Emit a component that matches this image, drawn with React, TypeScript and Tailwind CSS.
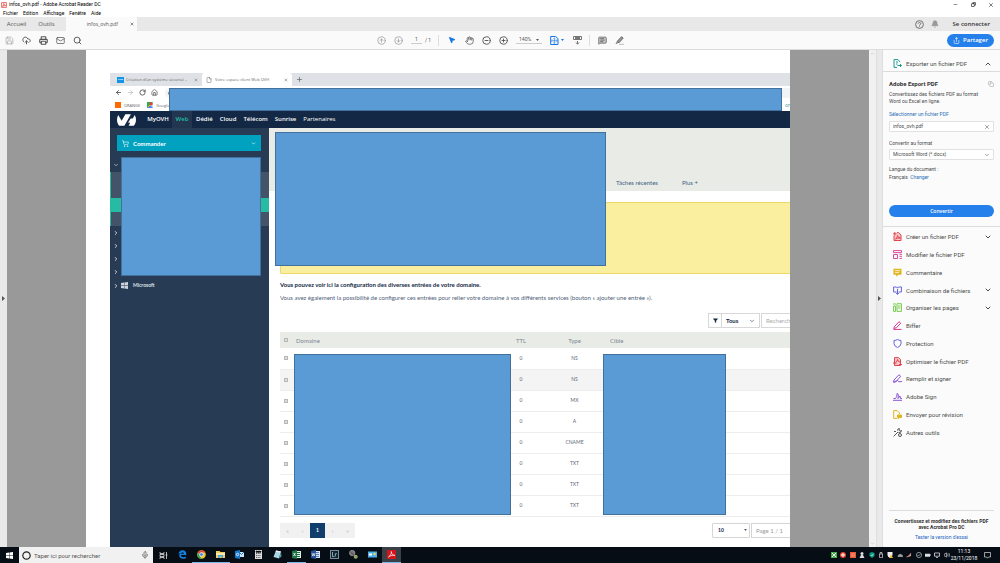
import type { ReactNode } from "react";
import {
  ArrowLeft, ArrowRight, Bell, ChevronDown, ChevronRight, ChevronUp, CircleArrowDown, CircleArrowUp,
  CircleMinus, CirclePlus, CloudUpload, Copy, File, Filter, Hand, House, Lock, Mail, MessageSquareText, Mic,
  Minus, MousePointer2, Plus, Printer, RotateCw, Save, Search, Share, ShoppingCart, X,
} from "lucide-react";

const ui = "font-['Open_Sans','Noto_Sans',sans-serif]";
const small = "font-['Roboto','Noto_Sans',sans-serif]";
const web = "font-['Lato','Noto_Sans',sans-serif]";

const records = ["NS", "NS", "MX", "A", "CNAME", "TXT", "TXT", "TXT"];

export default function App() {
  return (
    <div className={`${ui} flex h-screen flex-col overflow-hidden bg-[#fdfdfd] text-[5px] leading-[7px] text-[#4b4b4b]`}>
      <TitleBar />
      <TabBar />
      <Toolbar />
      <main className="flex min-h-0 flex-1 bg-[#999]">
        <div className="flex w-[7px] shrink-0 items-center justify-center bg-[#e9e9e9]"><Triangle /></div>
        <div className="flex min-w-0 flex-1 justify-center overflow-hidden"><Document /></div>
        <div className="flex w-[7px] shrink-0 flex-col items-center justify-between bg-[#f1f1f1] py-px text-[#aaa]"><ChevronUp size={5} /><ChevronDown size={5} /></div>
        <div className="flex w-[7px] shrink-0 items-center justify-center border-x border-[#dedede] bg-[#e9e9e9]"><Triangle /></div>
        <ToolsPanel />
      </main>
      <Taskbar />
    </div>
  );
}

function Triangle() {
  return <svg width="3" height="5" viewBox="0 0 3 5"><path d="M0 0l3 2.5L0 5z" fill="#555" /></svg>;
}

function IconButton({ label, children, className = "" }: { label: string; children: ReactNode; className?: string }) {
  return <button aria-label={label} className={`flex shrink-0 items-center justify-center ${className}`}>{children}</button>;
}

function TitleBar() {
  return (
    <header className={`${small} h-[17px] shrink-0 bg-white text-black`}>
      <div className="flex h-[9px] items-center pl-[1px]">
        <svg width="6" height="6" viewBox="0 0 6 6" className="mr-[2px]"><rect x=".4" y=".4" width="5.2" height="5.2" rx=".6" fill="#fbe3e1" stroke="#e0564c" strokeWidth=".8" /><path d="M1.4 4.4C3 3.6 3 2.3 2.7 1.5c.3 1.6 1 2.1 2 2.1-1.2-.1-2.2.2-3.300.8" fill="none" stroke="#d8352a" strokeWidth=".5" /></svg>
        <h1>infos_ovh.pdf - Adobe Acrobat Reader DC</h1>
        <div className="ml-auto flex">
          <IconButton label="Réduire" className="w-[18px]"><Minus size={5} /></IconButton>
          <IconButton label="Restaurer" className="w-[18px]"><Copy size={5} className="-scale-x-100" strokeWidth={3} /></IconButton>
          <IconButton label="Fermer" className="w-[18px]"><X size={6} /></IconButton>
        </div>
      </div>
      <nav className="flex h-[8px] items-center gap-[5px] pl-[3px]">
        {["Fichier", "Edition", "Affichage", "Fenêtre", "Aide"].map((m) => <button key={m}>{m}</button>)}
      </nav>
    </header>
  );
}

function TabBar() {
  return (
    <div className="flex h-[14px] shrink-0 items-center bg-[#e8e8e8] text-[6px] text-[#555]">
      <button className="w-[33px]">Accueil</button>
      <button className="w-[27px]">Outils</button>
      <div className="ml-[6px] flex h-full w-[71px] items-center justify-end bg-[#fafafa] pr-[3px]">
        <span className="text-[5px]">infos_ovh.pdf</span>
        <IconButton label="Fermer l'onglet" className="ml-[12px]"><X size={4} strokeWidth={4} /></IconButton>
      </div>
      <div className="ml-auto flex items-center pr-[10px]">
        <IconButton label="Aide">
          <svg width="9" height="9" viewBox="0 0 9 9" fill="none" stroke="#555" strokeWidth=".8"><circle cx="4.500" cy="4.500" r="3.900" /><path d="M3.200 3.700c0-1.700 2.700-1.500 2.600 0 0 .9-1.300.9-1.300 1.900M4.500 6.300v.8" /></svg>
        </IconButton>
        <IconButton label="Notifications" className="ml-[7px] text-[#999]"><Bell size={8} fill="currentColor" /></IconButton>
        <button className="ml-[14px] font-semibold text-[#333]">Se connecter</button>
      </div>
    </div>
  );
}

function Toolbar() {
  return (
    <div className={`${small} flex h-[19px] shrink-0 items-center border-b border-[#dcdcdc] bg-[#fafafa] text-[#555]`}>
      <div className="flex flex-1 items-center gap-[8px] pl-[5px]">
        <IconButton label="Enregistrer" className="text-[#aaa]"><Save size={9} /></IconButton>
        <IconButton label="Envoyer"><CloudUpload size={9} strokeWidth={2.500} /></IconButton>
        <IconButton label="Imprimer"><Printer size={9} strokeWidth={3} /></IconButton>
        <IconButton label="Courriel"><Mail size={9} /></IconButton>
        <IconButton label="Rechercher"><Search size={9} strokeWidth={2.500} /></IconButton>
      </div>
      <div className="flex shrink-0 items-center pl-[2px]">
        <IconButton label="Page précédente" className="text-[#999]"><CircleArrowUp size={9} /></IconButton>
        <IconButton label="Page suivante" className="ml-[8px] text-[#999]"><CircleArrowDown size={9} /></IconButton>
        <input aria-label="Page" defaultValue="1" className="ml-[8px] w-[11px] border-b border-[#ccc] text-center" />
        <span className="ml-[3px]">/ 1</span>
        <i className="ml-[7px] h-[11px] w-px bg-[#ddd]" />
        <IconButton label="Sélection" className="ml-[9px] text-[#1473e6]"><MousePointer2 size={8} fill="currentColor" /></IconButton>
        <IconButton label="Main" className="ml-[9px]"><Hand size={9} /></IconButton>
        <IconButton label="Zoom arrière" className="ml-[8px]"><CircleMinus size={9} strokeWidth={2.500} /></IconButton>
        <IconButton label="Zoom avant" className="ml-[8px]"><CirclePlus size={9} strokeWidth={2.500} /></IconButton>
        <button className="ml-[8px] flex w-[26px] items-center justify-between border-b border-[#ccc] px-[3px]">140%<Caret /></button>
        <IconButton label="Ajuster la page" className="ml-[8px] gap-[2px] text-[#1473e6]">
          <svg width="9" height="9" viewBox="0 0 9 9" fill="none" stroke="currentColor"><path d="M.7.5h5L8 2.700v5.800H.7z" strokeWidth="1" /><path d="M2 4.700h5M4.400 2.200v5M2 3.500l-.7 1.200.7 1.200M6.700 3.500l.7 1.200-.7 1.200M3.300 2.800l1.100-.8 1.100.8M3.300 6.700l1.100.8 1.100-.8" strokeWidth=".6" /></svg>
          <Caret />
        </IconButton>
        <IconButton label="Défilement" className="ml-[9px]">
          <svg width="9" height="9" viewBox="0 0 9 9" fill="none" stroke="#666"><path d="M.5.500h8v3h-8zM2 1.500h5M2 2.500h5M4.500 5v3M3 6.500l1.500 1.700L6 6.500" strokeWidth=".9" /></svg>
        </IconButton>
        <i className="ml-[7px] h-[11px] w-px bg-[#ddd]" />
        <IconButton label="Commentaire" className="ml-[8px]"><MessageSquareText size={9} fill="#ccc" /></IconButton>
        <IconButton label="Surligner" className="ml-[8px]">
          <svg width="9" height="9" viewBox="0 0 9 9"><path d="M2 5.500L6.500.700l1.700 1.400L4 6.800z" fill="#999" stroke="#555" strokeWidth=".8" /><path d="M1.700 6L.5 8l2.800-.9" fill="#555" /><path d="M4 8.300h5" stroke="#bbb" /></svg>
        </IconButton>
      </div>
      <div className="flex flex-1 justify-end pr-[6px]">
        <button className={`${ui} flex h-[13px] w-[47px] items-center justify-center gap-[3px] rounded-full bg-[#2680eb] text-[6px] font-semibold text-white`}><Share size={7} />Partager</button>
      </div>
    </div>
  );
}

function Caret() {
  return <svg width="3" height="2" viewBox="0 0 3 2" className="shrink-0"><path d="M0 0h3L1.500 2z" fill="currentColor" /></svg>;
}

/* One PDF page; the blue boxes are annotations lying over the scanned content. */
function Document() {
  return (
    <article className="relative w-[704px] shrink-0 overflow-hidden bg-white pt-[23px] pl-[24px]">
      <BrowserChrome />
      <OvhNav />
      <div className={`${web} flex h-full`}>
        <OvhSidebar />
        <OvhContent />
      </div>
      <Mask className="top-[38px] left-[83px] h-[23px] w-[613px]" />
      <Mask className="top-[107px] left-[35px] h-[119px] w-[140px]" />
      <Mask className="top-[82px] left-[189px] h-[134px] w-[331px]" />
      <Mask className="top-[304px] left-[208px] h-[161px] w-[217px]" />
      <Mask className="top-[304px] left-[517px] h-[161px] w-[123px]" />
    </article>
  );
}

function Mask({ className }: { className: string }) {
  return <div className={`absolute border border-[#41719c] bg-[#5b9bd5] ${className}`} />;
}

function BrowserChrome() {
  return (
    <div className="text-[4px] text-[#666]">
      <div className="flex h-[13px] items-center bg-[#dee1e6]">
        <div className="flex w-[92px] items-center pr-[4px] pl-[7px]">
          <span className="flex h-[6px] w-[7px] items-center justify-center overflow-hidden bg-[#1295e8] text-[2px] font-bold text-white">SCIM</span>
          <span className="ml-[2px] flex-1 truncate">Création d'un système sécurisé –</span>
          <X size={4} strokeWidth={3} />
        </div>
        <div className="flex h-full w-[90px] items-center rounded-t-[3px] bg-white pr-[4px] pl-[4px]">
          <File size={6} />
          <span className="ml-[3px] flex-1">Votre espace client Web OVH</span>
          <X size={4} strokeWidth={3} />
        </div>
        <Plus size={7} className="ml-[4px]" strokeWidth={2.500} />
      </div>
      <div className="flex h-[13px] items-center gap-[5px] pl-[5px] text-[#555]">
        <ArrowLeft size={7} strokeWidth={3} /><ArrowRight size={7} className="text-[#aaa]" /><RotateCw size={7} strokeWidth={3} /><House size={7} strokeWidth={2.500} />
        <span className="ml-[2px] flex h-[10px] flex-1 items-center rounded-l-full bg-[#f1f3f4] pl-[3px]"><Lock size={5} fill="currentColor" /></span>
      </div>
      <div className="flex h-[12px] items-center pl-[5px]">
        <i className="h-[6px] w-[6px] bg-[#ff6a00]" />
        <a href="#" className="ml-[3px]">ORANGE</a>
        <svg width="6" height="6" viewBox="0 0 6 6" className="ml-[7px]"><path d="M0 0h6v6H0z" fill="#34a853" /><path d="M0 6l6-6v6z" fill="#d7dde6" /><path d="M0 6l3-3 3 3z" fill="#4285f4" /><path d="M1 5l4-4" stroke="#fbbc05" /><circle cx="4.200" cy="1.800" r="1.600" fill="#ea4335" /></svg>
        <a href="#" className="ml-[3px]">Google</a>
        <span className="ml-auto text-[5px] text-[#3a9b95]">or</span>
      </div>
    </div>
  );
}

function OvhNav() {
  const link = "flex h-full items-center";
  return (
    <nav className="flex h-[17px] items-center bg-[#122844] text-[6px] font-semibold text-white">
      <svg width="19" height="12" viewBox="0 4.800 24 14.400" className="ml-[7px]" fill="#fff">
        <path d="M19.881 10.095l2.563-4.450C23.434 7.389 24 9.404 24 11.555c0 2.880-1.017 5.523-2.710 7.594h-6.620l2.040-3.541h-2.696l3.176-5.513h2.691zm-2.320-5.243L9.333 19.140l.003.009H2.709C1.014 17.077 0 14.435 0 11.555c0-2.152.570-4.170 1.561-5.918L5.855 13.080l4.750-8.228h6.956z" />
      </svg>
      <a href="#" className={`${link} ml-[8px] w-[28px] justify-center`}>MyOVH</a>
      <a href="#" className={`${link} w-[20px] justify-center bg-[#22364f] text-[#28bba4]`}>Web</a>
      <a href="#" className={`${link} ml-[4px]`}>Dédié</a>
      <a href="#" className={`${link} ml-[7px]`}>Cloud</a>
      <a href="#" className={`${link} ml-[7px]`}>Télécom</a>
      <a href="#" className={`${link} ml-[7px]`}>Sunrise</a>
      <a href="#" className={`${link} ml-[7px] font-normal`}>Partenaires</a>
    </nav>
  );
}

function OvhSidebar() {
  return (
    <aside className="w-[159px] shrink-0 bg-[#283b55] pt-[7px] text-[5px] font-bold text-white">
      <button className="ml-[7px] flex h-[16px] w-[144px] items-center gap-[4px] bg-[#00a2bf] px-[5px] text-[6px]">
        <ShoppingCart size={7} />Commander<ChevronDown size={5} className="ml-auto" strokeWidth={3} />
      </button>
      <div className="flex h-[21px] items-center pt-[7px] pl-[3px]"><ChevronDown size={6} /></div>
      <div className="border-l border-[#28bba4] bg-[#435468] pt-[26px] pb-[14px]"><div className="h-[14px] bg-[#28bba4]" /></div>
      {[1, 2, 3, 4].map((n) => <div key={n} className="flex h-[13px] items-center pl-[3px]"><ChevronRight size={6} strokeWidth={3} /></div>)}
      <div className="flex h-[15px] items-center pl-[3px]">
        <ChevronRight size={6} strokeWidth={3} />
        <svg width="7" height="7" viewBox="0 0 7 7" fill="#cbd2da" className="mr-[5px] ml-[2px]"><path d="M0 1l3-.4v2.700H0zM3.400.500L7 0v3.300H3.400zM0 3.700h3v2.700L0 6zM3.400 3.700H7V7l-3.600-.5z" /></svg>
        <span className="text-[#dde2e8]">Microsoft</span>
      </div>
    </aside>
  );
}

function OvhContent() {
  return (
    <section className="min-w-0 flex-1 text-[6px] text-[#4f6178]">
      <div className="flex h-[63px] items-end gap-[24px] bg-[#e8ebe6] pb-[5px] pl-[347px] text-[#3f6282]">
        <a href="#">Tâches récentes</a>
        <a href="#">Plus +</a>
      </div>
      <div className="pt-[11px] pl-[11px]">
        <div className="h-[72px] rounded-l-[2px] border border-r-0 border-[#ecd86a] bg-[#f9ef9f]" />
        <p className="mt-[7px] font-bold text-[#122844]">Vous pouvez voir ici la configuration des diverses entrées de votre domaine.</p>
        <p className="mt-[6px] whitespace-nowrap">Vous avez également la possibilité de configurer ces entrées pour relier votre domaine à vos différents services (bouton « ajouter une entrée »).</p>
        <div className="mt-[12px] flex h-[15px] pl-[428px]">
          <button aria-label="Filtrer" className="flex w-[14px] shrink-0 items-center justify-center border border-[#d8d8d8] text-[#122844]"><Filter size={5} fill="currentColor" /></button>
          <div className="flex w-[38px] shrink-0 items-center border border-l-0 border-[#d8d8d8] pr-[4px]">
            <select aria-label="Type d'entrée" className="min-w-0 flex-1 appearance-none pl-[4px] font-bold text-[#122844]"><option>Tous</option></select>
            <ChevronDown size={6} strokeWidth={3} className="shrink-0" />
          </div>
          <input aria-label="Recherche" placeholder="Rechercher" className="ml-[1px] w-[60px] shrink-0 border border-[#d8d8d8] pl-[4px] placeholder:text-[#aaa]" />
        </div>
        <table className="mt-[4px] w-full table-fixed text-center text-[5px]">
          <colgroup><col className="w-[12px]" /><col className="w-[210px]" /><col className="w-[38px]" /><col className="w-[69px]" /><col /></colgroup>
          <thead>
            <tr className="h-[16px] bg-[#e8ebe6] text-[6px] text-[#7b8794]">
              <th className="font-normal"><Check label="Tout sélectionner" /></th>
              <th className="pl-[4px] text-left font-normal">Domaine</th>
              <th className="font-normal">TTL</th>
              <th className="font-normal">Type</th>
              <th className="pl-px text-left font-normal">Cible</th>
            </tr>
          </thead>
          <tbody>
            {records.map((type, i) => (
              <tr key={i} className="h-[21px] border-b border-[#ededed] text-[#5d6877] even:bg-[#f4f4f4] nth-[n+3]:bg-white">
                <td><Check label={`Entrée ${i + 1}`} /></td>
                <td />
                <td>0</td>
                <td>{type}</td>
                <td />
              </tr>
            ))}
          </tbody>
        </table>
        <div className="mt-[6px] flex h-[15px]">
          {["«", "‹", "1", "›", "»"].map((p) => (
            <button key={p} className={p === "1" ? "w-[15px] shrink-0 bg-[#113f6d] text-[5px] font-bold text-white" : "w-[15px] shrink-0 bg-[#f1f1f1] text-[#b5b5b5]"}>{p}</button>
          ))}
          <div className="ml-[357px] flex w-[38px] shrink-0 items-center rounded-[1px] border border-[#d5d5d5] pr-[2px]">
            <select aria-label="Entrées par page" className="min-w-0 flex-1 appearance-none pl-[5px] text-[5px] font-bold text-[#122844]"><option>10</option></select>
            <Caret />
          </div>
          <input aria-label="Page" defaultValue="Page 1 / 1" className="ml-[1px] w-[50px] shrink-0 border border-[#d5d5d5] pl-[4px] text-[#999]" />
        </div>
      </div>
    </section>
  );
}

function Check({ label }: { label: string }) {
  return <input type="checkbox" aria-label={label} className="mx-auto block h-[4px] w-[4px] appearance-none border border-[#b8b8b8] bg-[#dcdcdc]" />;
}

const p = { fill: "none", strokeWidth: 1 };
const tools: { name: string; more?: boolean; icon: ReactNode }[] = [
  { name: "Créer un fichier PDF", more: true, icon: <g {...p} stroke="#e1454e"><path d="M1 3.500V8.500H8V3L5.500.600H4" fill="#f9c7c9" /><path d="M2.500 7q2-1 2-3.500.500 2.500 3 2.500-3-.2-5 1M0 1.800h3.500M1.800 0v3.500" /></g> },
  { name: "Modifier le fichier PDF", icon: <g {...p} stroke="#d94a9c"><path d="M.5.600h8v2h-8zM.5 4.500h4v4h-4zM6.500 4.300H9M6.500 6.300H9M6.500 8.400H9" /></g> },
  { name: "Commentaire", icon: <g><path d="M.5.700h8v6H5L3.500 8.800 3 6.700H.5z" fill="#dfb51e" /><path d="M2 2.700h5M2 4.600h4" stroke="#fff" strokeWidth=".8" /></g> },
  { name: "Combinaison de fichiers", more: true, icon: <g {...p} stroke="#6464dc"><path d="M3.500 6H.600V1h3l1 1.200M5.500 6h2.900V1h-3L4.500 2.200M4.500 3v5M3 6.800l1.500 1.700L6 6.800" /></g> },
  { name: "Organiser les pages", more: true, icon: <g {...p} stroke="#76cc4e"><path d="M.6 3h2v5.400h-2zM4 .700h4.400v7.700H4zM5 3h2.400M5 5h2.400M0 1h3" /></g> },
  { name: "Biffer", icon: <g {...p} stroke="#d8368f"><path d="M1.500 5.500L6 .700l1.700 1.500L3.500 6.700.700 7.500zM.5 8.400h8" /></g> },
  { name: "Protection", icon: <path {...p} stroke="#6464dc" d="M1 1.500Q3 1.500 4.500.500 6 1.500 8 1.500V4.500Q8 7 4.500 8.600 1 7 1 4.500z" /> },
  { name: "Optimiser le fichier PDF", icon: <g {...p} stroke="#e1454e"><path d="M1.500.600h4L7.500 2.500v6h-6z" fill="#f9c7c9" /><path d="M2.500 5.500q2-1 2-3 .3 2 2.500 2.500M0 6h3.500M6 7.500h3" /></g> },
  { name: "Remplir et signer", icon: <g {...p} stroke="#8a55d6"><path d="M1 6L6 .700l1.700 1.600L3.500 7 .600 8zM.5 8.500Q4 7.500 4.500 6.500 5 8.500 9 7.500" /></g> },
  { name: "Adobe Sign", icon: <g {...p} stroke="#8a55d6"><path d="M0 8.300h9M.5 6.500h2q2-2 1.500-5 2-.2 1 5L7 4l.5 2.500H9" /></g> },
  { name: "Envoyer pour révision", icon: <g {...p} stroke="#dfb51e"><path d="M4 8.400H.700V.600h3.500L6.500 3v1" /><path d="M4.500 5h4v2.500h-2L5.500 8.700V7.500h-1z" fill="#dfb51e" /></g> },
  { name: "Autres outils", icon: <g {...p} stroke="#555"><path d="M.6 8.400L5 4M4.500 2.500Q4.500.500 6.500.600L6 2.200l1 1L8.500 2.500Q8.500 5 5.500 4.500M1 3.500h2" /><circle cx="7" cy="7" r="1.500" /></g> },
];

function ToolsPanel() {
  return (
    <aside className={`${small} flex w-[117px] shrink-0 flex-col bg-[#fbfbfb]`}>
      <button className="flex h-[22px] shrink-0 items-center border-b border-[#dcdcdc] pt-[6px] pr-[8px] pl-[10px] text-[6px]">
        <svg width="9" height="9" viewBox="0 0 9 9" fill="none" stroke="#1f9a92"><path d="M6.500 3V2.200L5 .600H1v7.800h3M3 3h2M3 5h1.500M4.500 6.500h4M7 5l1.500 1.500L7 8" /></svg>
        <span className="ml-[4px]">Exporter un fichier PDF</span>
        <ChevronUp size={8} className="ml-auto" strokeWidth={3} />
      </button>
      <form className="flex h-[155px] shrink-0 flex-col items-stretch border-b border-[#dcdcdc] pr-[6px] pl-[6px]">
        <div className="mt-[8px] flex items-center justify-between text-[6px] font-bold text-[#333]">Adobe Export PDF<Copy size={6} className="text-[#999]" /></div>
        <p className="mt-[4px]">Convertissez des fichiers PDF au format<br />Word ou Excel en ligne.</p>
        <label htmlFor="file" className="mt-[6px] text-[#2a6fb5]">Sélectionner un fichier PDF</label>
        <div className="mt-[3px] flex h-[11px] shrink-0 items-center rounded-[1px] border border-[#e1e1e1] bg-white px-[3px]">
          <input id="file" defaultValue="infos_ovh.pdf" className="min-w-0 flex-1" />
          <X size={6} />
        </div>
        <label htmlFor="format" className="mt-[8px]">Convertir au format</label>
        <div className="mt-[2px] flex h-[11px] shrink-0 items-center rounded-[1px] border border-[#e1e1e1] bg-white px-[3px]">
          <select id="format" className="min-w-0 flex-1 appearance-none"><option>Microsoft Word (*.docx)</option></select>
          <ChevronDown size={6} />
        </div>
        <p className="mt-[6px]">Langue du document :</p>
        <p className="mt-[1px]">Français <a href="#" className="ml-px text-[#2a6fb5]">Changer</a></p>
        <button type="button" className={`${ui} mt-[24px] h-[12px] shrink-0 rounded-full bg-[#2680eb] text-[5px] font-semibold text-white`}>Convertir</button>
      </form>
      <div className="flex h-[214px] shrink-0 flex-col pt-px text-[6px]">
        {tools.map((t) => (
          <button key={t.name} className="flex flex-1 items-center pr-[8px] pl-[10px]">
            <svg width="9" height="9" viewBox="0 0 9 9">{t.icon}</svg>
            <span className="ml-[4px]">{t.name}</span>
            {t.more && <ChevronDown size={8} className="ml-auto" strokeWidth={3} />}
          </button>
        ))}
      </div>
      <footer className="mx-[6px] mt-auto border-t border-[#dcdcdc] pt-[7px] pb-[7px] text-center leading-[6px]">
        <p className="font-bold whitespace-nowrap text-[#333]">Convertissez et modifiez des fichiers PDF<br />avec Acrobat Pro DC</p>
        <a href="#" className="mt-[4px] block text-[#1f66c0]">Tester la version d'essai</a>
      </footer>
    </aside>
  );
}

const apps: { name: string; open?: boolean; active?: boolean; icon: ReactNode }[] = [
  { name: "Edge", icon: <path d="M8.300 5H2.800c.2 2.400 3 2.800 5 1.600v1.700C5 9.600 1 8.600 1.300 5.200 1.500 3.800 2.700 3 3.600 2.700 2 2.700 1 3.500.400 4.600.700 2 2.200.300 4.600.300 7.400.300 8.600 2.500 8.300 5zM3 3.700h3C5.900 2 3.300 2 3 3.700z" fill="#1284e0" /> },
  { name: "Chrome", open: true, icon: <g><circle cx="4.500" cy="4.500" r="4.300" fill="#f3c51c" /><path d="M.8 2.300Q2.200.200 4.500.200 7.200.200 8.300 2.500H4.500L2.800 5.500z" fill="#e0493a" /><path d="M.8 2.300L3 6l1.600 2.800Q.300 8.700.200 4.500q0-1.200.6-2.200z" fill="#37a853" /><circle cx="4.500" cy="4.500" r="1.900" fill="#4a86ea" stroke="#fff" strokeWidth=".7" /></g> },
  { name: "Explorateur", open: true, icon: <g><path d="M0 1h3.500l1 1H9v6H0z" fill="#f2cc61" /><path d="M0 3h9v2H0z" fill="#fbe9a8" /><path d="M2 8V5h5v3H5.500V6.500h-2V8z" fill="#42a9e6" /></g> },
  { name: "Outlook", icon: <g><path d="M4 2h5v5H4z" fill="#cfe4f6" /><path d="M4 2l2.500 2.500L9 2" stroke="#1677c9" fill="none" /><path d="M0 1l5-1v9L0 8z" fill="#1677c9" /><circle cx="2.500" cy="4.500" r="1.200" stroke="#fff" strokeWidth=".8" fill="none" /></g> },
  { name: "Calculatrice", icon: <g><path d="M1 0h7v9H1z" fill="#ddd" /><path d="M2 1h5v1.500H2zM2 3.500h5M2 5.500h5M2 7.500h5" stroke="#333" strokeWidth=".8" strokeDasharray="1 .7" /></g> },
  { name: "Bloc-notes", icon: <g><path d="M3 .500l5 1L6 8.500.500 7z" fill="#a8d5df" /><path d="M3 .500l5 1-.4 1.200-5-1z" fill="#eee" /><path d="M6 8.500l2-7 .5 5z" fill="#5a98a5" /></g> },
  { name: "Excel", open: true, icon: <g><path d="M4 1h5v7H4z" fill="#dcefe2" /><path d="M5 2.500h3M5 4.500h3M5 6.500h3" stroke="#1f7244" /><path d="M0 1l5-1v9L0 8z" fill="#1f7244" /><path d="M1.500 3l2 3M3.500 3l-2 3" stroke="#fff" strokeWidth=".8" /></g> },
  { name: "Word", icon: <g><path d="M4 1h5v7H4z" fill="#d9e4f5" /><path d="M5 2.500h3M5 4.500h3M5 6.500h3" stroke="#2a5699" strokeWidth=".7" /><path d="M0 1l5-1v9L0 8z" fill="#2a5699" /><path d="M1 3l.7 3 .8-2.500L3.300 6 4 3" stroke="#fff" strokeWidth=".6" fill="none" /></g> },
  { name: "Lightroom", icon: <g><path d="M.4.400h8.200v8.200H.400z" fill="#0d2430" stroke="#a5bcc5" strokeWidth=".8" /><path d="M2.500 2v4.500h2M5.300 6.500v-3M5.300 4.200q.5-.7 1.500-.5" stroke="#a9c9d6" strokeWidth=".8" fill="none" /></g> },
  { name: "Recherche Photos", icon: <g><circle cx="3.200" cy="3" r="2.700" fill="#777" stroke="#aaa" strokeWidth=".6" /><path d="M1.500 2l4 3.500" stroke="#613f45" /><circle cx="6.700" cy="6.700" r="2" fill="#91a970" /></g> },
  { name: "Paramètres d'affichage", icon: <g><path d="M0 1.500h9v6H0z" fill="#4eaee9" /><path d="M1 3.500h3v2H1z" fill="#fff" /><circle cx="6.500" cy="4" r="1.200" fill="#f4da5b" /></g> },
  { name: "Acrobat Reader", open: true, active: true, icon: <g><path d="M0 0h9v9H0z" fill="#d3141b" /><path d="M1.500 7C4 5.500 4.600 3 4.300 1.500 4.300 4 6 5.300 8 5.400 5.500 5 3.500 5.500 1.500 7z" fill="none" stroke="#fff" strokeWidth=".7" /></g> },
];

const tray: ReactNode[] = [
  <g><path d="M0 0h6v6H0z" fill="#46ad4a" /><path d="M1 1l4 4M5 1L1 5" stroke="#e8f5e8" /></g>,
  <g><circle cx="3" cy="3" r="3" fill="#e2482c" /><path d="M3 1v4M1 3h4" stroke="#fff" /></g>,
  <g><path d="M0 0h6v6H0z" fill="#ec5836" /><path d="M1 2h4M1 4h4" stroke="#f8c0b0" strokeWidth=".7" /></g>,
  <g fill="#ddd"><circle cx="3" cy="1.500" r="1.500" /><path d="M2 3h2l1.500 3h-5z" /></g>,
  <g><path d="M3 0l2.500 1v3L3 6 .500 4V1z" fill="#0d9c82" /><path d="M1.800 3l1 1L4.300 2" fill="none" stroke="#fff" strokeWidth=".6" /></g>,
  <path d="M1.500 2h3v3.600h-3zM2 2V.500h2V2" fill="none" stroke="#ddd" strokeWidth=".7" />,
  <g><path d="M.5 0h5v3Q5.500 5 3 6 .500 5 .500 3z" fill="#eee" /><path d="M4 2.500L6 6H2.500z" fill="#f3bd28" /></g>,
  <path d="M1 5Q0 3 2 2.800 3 .800 4.500 2.500 6.300 2.800 5.800 5z" fill="#999" />,
  <g><path d="M0 4h2l3-3v3l-3 1z" fill="#bbb" /><path d="M1 5.500l4-4" stroke="#d24a3e" /></g>,
  <g fill="none" stroke="#ddd" strokeWidth=".6"><circle cx="3" cy="3" r="2.600" /><path d="M1.500 3l1 1 2-2" /></g>,
  <path d="M0 1.700h5v3H0zM5 2.500h1v1H5z" fill="#ddd" />,
  <path d="M.5 1h5v3.200h-5zM2 5.600h2" fill="none" stroke="#ddd" strokeWidth=".8" />,
  <path d="M0 2h1L2.500.800v4.400L1 4H0zM3.500 1.700q1 1.300 0 2.600M4.800 1q1.500 2 0 4" fill="none" stroke="#ddd" strokeWidth=".6" />,
];

function Taskbar() {
  return (
    <footer className={`${small} flex h-[16px] shrink-0 items-stretch bg-[#060d15] text-white`}>
      <IconButton label="Démarrer" className="w-[19px]">
        <svg width="7" height="7" viewBox="0 0 7 7" fill="#fff"><path d="M0 1l3-.4v2.700H0zM3.400.500L7 0v3.300H3.400zM0 3.700h3v2.700L0 6zM3.400 3.700H7V7l-3.600-.5z" /></svg>
      </IconButton>
      <div className="flex w-[134px] items-center bg-[#f1f1f1] pr-[4px] pl-[3px] text-[#555]">
        <svg width="9" height="9" viewBox="0 0 9 9"><circle cx="4.500" cy="4.500" r="3.700" fill="none" stroke="#222" strokeWidth="1.200" /></svg>
        <input aria-label="Rechercher" placeholder="Taper ici pour rechercher" className="ml-[3px] min-w-0 flex-1 text-[6px] placeholder:text-[#555]" />
        <Mic size={8} />
      </div>
      <IconButton label="Vue des tâches" className="w-[20px]">
        <svg width="9" height="9" viewBox="0 0 9 9"><path d="M1 1v1.500h4V1M1 8V6.500h4V8M1 3.500h4v2H1zM7.500 1v7M6.500 4h2" fill="none" stroke="#ddd" strokeWidth=".8" /></svg>
      </IconButton>
      {apps.map((a) => (
        <button key={a.name} aria-label={a.name} className={`flex w-[19px] items-center justify-center border-b ${a.open ? "border-[#76b9ed]" : "border-transparent"} ${a.active ? "bg-[#3a4047]" : ""}`}>
          <svg width="9" height="9" viewBox="0 0 9 9">{a.icon}</svg>
        </button>
      ))}
      <div className="ml-auto flex w-[119px] items-center justify-between">
        {tray.map((icon, i) => <svg key={i} width="6" height="6" viewBox="0 0 6 6">{icon}</svg>)}
      </div>
      <div className="flex w-[28px] flex-col justify-center text-center leading-[7px]"><time>11:13</time><time>23/11/2018</time></div>
      <IconButton label="Notifications" className="mr-[9px] ml-[6px]">
        <svg width="7" height="7" viewBox="0 0 7 7"><path d="M.5.500h6v4.500h-2L3.500 6.200 2.500 5h-2z" fill="none" stroke="#ddd" strokeWidth=".7" /></svg>
      </IconButton>
    </footer>
  );
}
